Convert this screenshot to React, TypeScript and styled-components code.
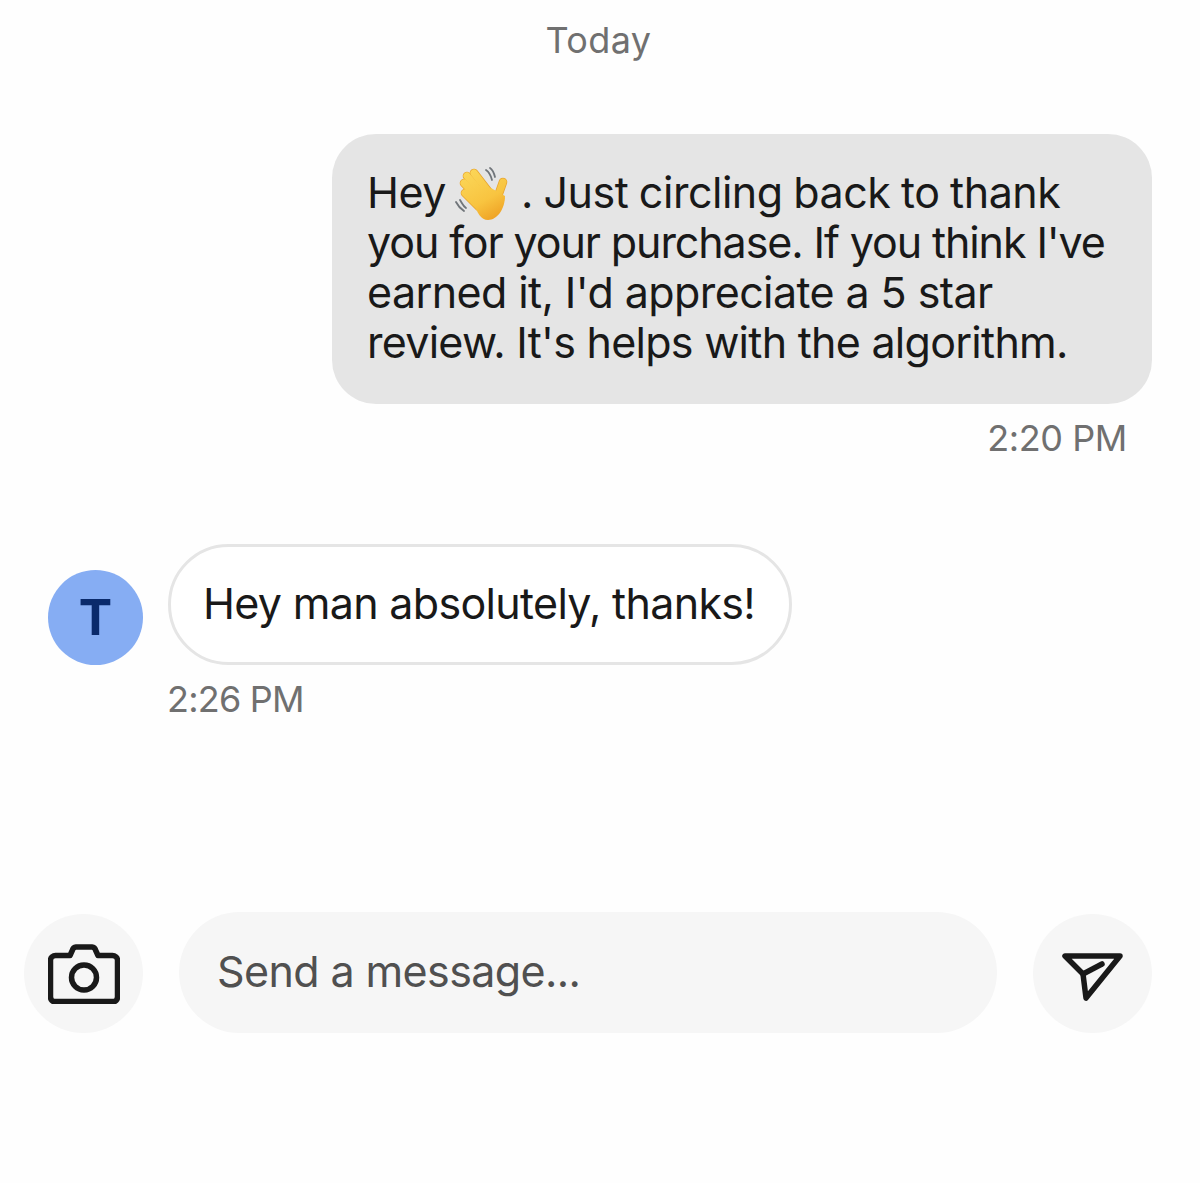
import React from "react";
import styled, { createGlobalStyle } from "styled-components";

const Global = createGlobalStyle`
  html, body { margin: 0; padding: 0; background: #fefefe; }
  body { font-family: Inter, "Liberation Sans", sans-serif; }
`;

const Page = styled.div`
  width: 1200px;
  height: 1183px;
  display: flex;
  flex-direction: column;
  overflow: hidden;
  background: #fefefe;
`;

const DayLabel = styled.div`
  margin-top: 18px;
  padding-right: 3px;
  height: 44px;
  line-height: 44px;
  text-align: center;
  font-size: 36px;
  letter-spacing: 0.4px;
  color: #707070;
`;

const Thread = styled.div`
  margin-top: 72px;
  padding: 0 48px;
  display: flex;
  flex-direction: column;
`;

const Outgoing = styled.div`
  align-self: flex-end;
  width: 820px;
  height: 270px;
  box-sizing: border-box;
  padding: 33px 35px;
  background: #e5e5e5;
  border-radius: 44px;
  font-size: 43px;
  color: #191919;
`;

const Line = styled.div<{ $spacing: number; $words?: number }>`
  height: 50px;
  line-height: 50px;
  white-space: pre;
  letter-spacing: ${(p) => p.$spacing}px;
  word-spacing: ${(p) => p.$words ?? 0}px;
`;

const Wave = styled.svg`
  display: inline-block;
  width: 56px;
  height: 56px;
  margin: -10px 10px -10px 9px;
  vertical-align: -5px;
`;

const Stamp = styled.div<{ $right?: boolean }>`
  margin-top: 13px;
  height: 42px;
  line-height: 42px;
  font-size: 36px;
  letter-spacing: ${(p) => (p.$right ? "-0.4px" : "-0.8px")};
  color: #707070;
  text-align: ${(p) => (p.$right ? "right" : "left")};
  padding-right: ${(p) => (p.$right ? "25px" : "0")};
  margin-left: ${(p) => (p.$right ? "0" : "119px")};
`;

const IncomingRow = styled.div`
  margin-top: 85px;
  display: flex;
  align-items: flex-end;
  gap: 25px;
`;

const Avatar = styled.div`
  width: 95px;
  height: 95px;
  box-sizing: border-box;
  padding-bottom: 2px;
  border-radius: 50%;
  background: #86adf3;
  color: #0a2a6b;
  font-size: 50px;
  font-weight: 700;
  display: flex;
  align-items: center;
  justify-content: center;
`;

const Incoming = styled.div`
  height: 121px;
  box-sizing: border-box;
  padding: 0 34px 4px 32px;
  display: flex;
  align-items: center;
  border: 3px solid #e5e5e5;
  border-radius: 61px;
  background: #fff;
  font-size: 43px;
  letter-spacing: -0.68px;
  color: #191919;
`;

const Composer = styled.div`
  margin-top: 192px;
  padding: 0 48px 0 24px;
  display: flex;
  align-items: flex-end;
  gap: 36px;
`;

const RoundButton = styled.div`
  flex: none;
  width: 119px;
  height: 119px;
  border-radius: 50%;
  background: #f6f6f6;
  display: flex;
  align-items: center;
  justify-content: center;
`;

const IconSvg = styled.svg<{ $drop?: number }>`
  display: block;
  margin-top: ${(p) => p.$drop ?? 0}px;
`;

const MessageInput = styled.div`
  flex: 1;
  height: 121px;
  box-sizing: border-box;
  padding: 0 38px 4px;
  display: flex;
  align-items: center;
  border-radius: 61px;
  background: #f6f6f6;
  font-size: 43px;
  letter-spacing: -0.6px;
  color: #505050;
`;

const fingers = [
  "M10 26 24 40",
  "M9 16 27 35",
  "M12 9 31 31",
  "M19 6 36 28",
  "M48 15 42 32",
];

const WaveEmoji = () => (
  <Wave viewBox="0 0 56 56">
    <defs>
      <linearGradient id="hand" gradientUnits="userSpaceOnUse" x1="12" y1="4" x2="40" y2="54">
        <stop offset="0" stopColor="#fbd658" />
        <stop offset="0.6" stopColor="#f8c440" />
        <stop offset="1" stopColor="#ee9f22" />
      </linearGradient>
    </defs>
    <g fill="none" stroke="#70757a" strokeWidth="1.8" strokeLinecap="round">
      <path d="M31 3c3 2 5 6 6 10" />
      <path d="M35 1c3 2 4 5 5 9" />
      <path d="M1 35c2 4 5 7 8 9" />
      <path d="M5 33c2 3 3 6 6 8" />
    </g>
    <g fill="none" strokeLinecap="round">
      {fingers.map((d) => (
        <path key={d} d={d} stroke="#e8a52f" strokeWidth="8.6" />
      ))}
      {fingers.map((d) => (
        <path key={d} d={d} stroke="url(#hand)" strokeWidth="7" />
      ))}
    </g>
    <path d="M19 36 36 21l14 8c0 13-8 24-17 24-7 0-11-7-14-17z" fill="url(#hand)" />
  </Wave>
);

const CameraIcon = () => (
  <IconSvg width="72" height="60" viewBox="0 0 72 60" fill="none" stroke="#191919" strokeWidth="5.5" strokeLinejoin="round">
    <path d="M22 11.500 24.500 6A4 4 0 0 1 28 3h16a4 4 0 0 1 3.500 3L50 11.500h14.500c2.500 0 5 2 5 4.500v37c0 3-2 5-5 5H7.500c-3 0-5-2-5-5V16c0-2.500 2.500-4.500 5-4.500z" />
    <path d="M3 56.500h66" strokeWidth="3.500" />
    <circle cx="36" cy="33.500" r="12.500" />
  </IconSvg>
);

const SendIcon = () => (
  <IconSvg $drop={7} width="62" height="50" viewBox="0 0 62 50" fill="none" stroke="#191919" strokeWidth="5.5" strokeLinecap="round" strokeLinejoin="round">
    <path d="M3 4h55L24 46 21 22z" />
    <path d="M21 22l19-10" />
  </IconSvg>
);

export default function App() {
  return (
    <Page>
      <Global />
      <DayLabel>Today</DayLabel>
      <Thread>
        <Outgoing>
          <Line $spacing={-0.48} $words={-1}>
            Hey
            <WaveEmoji />. Just circling back to thank
          </Line>
          <Line $spacing={-1.1}>you for your purchase. If you think I've</Line>
          <Line $spacing={-0.59}>earned it, I'd appreciate a 5 star</Line>
          <Line $spacing={-0.73}>review. It's helps with the algorithm.</Line>
        </Outgoing>
        <Stamp $right>2:20 PM</Stamp>
        <IncomingRow>
          <Avatar>T</Avatar>
          <Incoming>Hey man absolutely, thanks!</Incoming>
        </IncomingRow>
        <Stamp>2:26 PM</Stamp>
      </Thread>
      <Composer>
        <RoundButton>
          <CameraIcon />
        </RoundButton>
        <MessageInput>Send a message...</MessageInput>
        <RoundButton>
          <SendIcon />
        </RoundButton>
      </Composer>
    </Page>
  );
}
